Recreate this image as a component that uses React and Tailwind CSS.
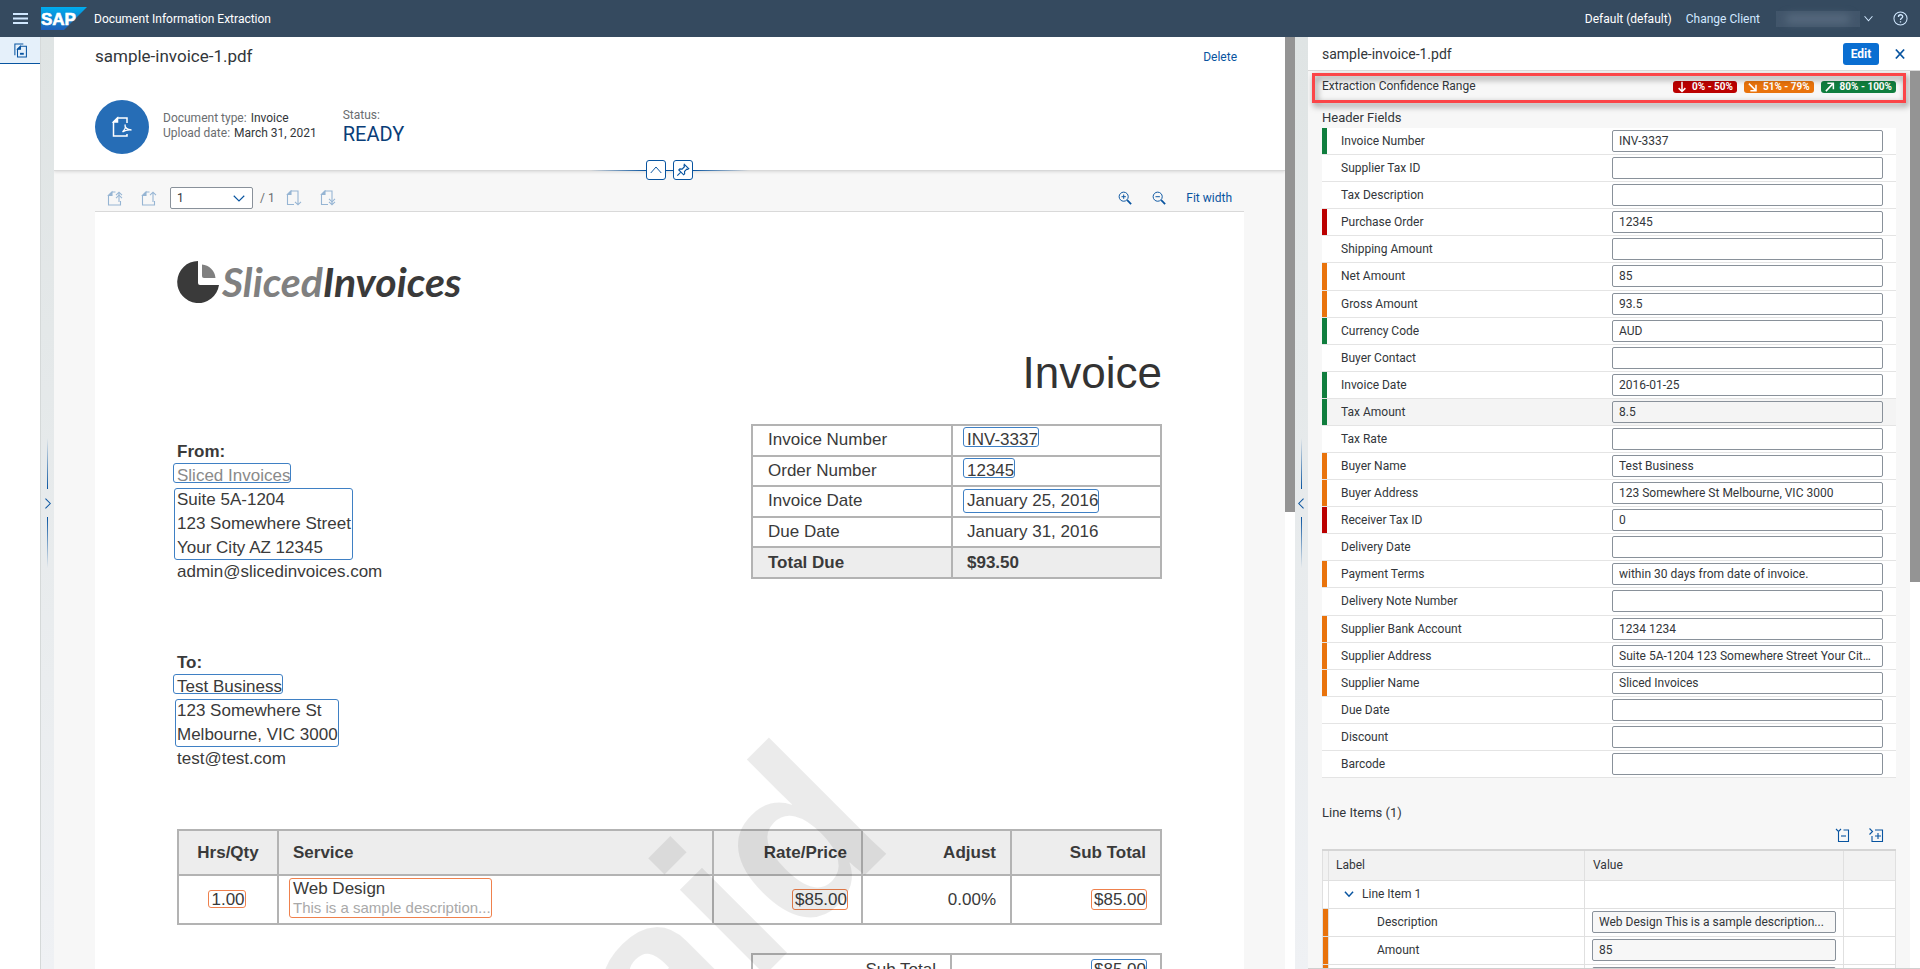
import React from "react";

const GREEN = "bg-[#107e3e]";
const ORANGE = "bg-[#e9730c]";
const RED = "bg-[#bb0000]";

const headerFields = [
  ["Invoice Number", "INV-3337", GREEN],
  ["Supplier Tax ID", "", ""],
  ["Tax Description", "", ""],
  ["Purchase Order", "12345", RED],
  ["Shipping Amount", "", ""],
  ["Net Amount", "85", ORANGE],
  ["Gross Amount", "93.5", ORANGE],
  ["Currency Code", "AUD", GREEN],
  ["Buyer Contact", "", ""],
  ["Invoice Date", "2016-01-25", GREEN],
  ["Tax Amount", "8.5", GREEN],
  ["Tax Rate", "", ""],
  ["Buyer Name", "Test Business", ORANGE],
  ["Buyer Address", "123 Somewhere St Melbourne, VIC 3000", ORANGE],
  ["Receiver Tax ID", "0", RED],
  ["Delivery Date", "", ""],
  ["Payment Terms", "within 30 days from date of invoice.", ORANGE],
  ["Delivery Note Number", "", ""],
  ["Supplier Bank Account", "1234 1234", ORANGE],
  ["Supplier Address", "Suite 5A-1204 123 Somewhere Street Your City AZ 12345", ORANGE],
  ["Supplier Name", "Sliced Invoices", ORANGE],
  ["Due Date", "", ""],
  ["Discount", "", ""],
  ["Barcode", "", ""],
];

function Icon({ size = 16, className = "", children }) {
  return (
    <svg width={size} height={size} viewBox="0 0 16 16" fill="none" stroke="currentColor" strokeWidth="1.1" className={className} aria-hidden="true">
      {children}
    </svg>
  );
}

function ShellBar() {
  return (
    <header className="flex h-[37px] shrink-0 items-center bg-[#354a5f] pl-3 pr-3 text-white">
      <button aria-label="Menu" className="flex w-[17px] justify-center text-[#d1e8ff]">
        <svg width="15" height="11" viewBox="0 0 15 11" aria-hidden="true">
          <path d="M0 1h15M0 5.5h15M0 10h15" stroke="currentColor" strokeWidth="1.8" />
        </svg>
      </button>
      <a href="#home" aria-label="SAP" className="ml-3">
        <svg width="46" height="23" viewBox="0 0 46 23" aria-hidden="true">
          <defs>
            <linearGradient id="sap" x1="0" y1="0" x2="0" y2="1">
              <stop offset="0" stopColor="#00aeef" />
              <stop offset="0.5" stopColor="#0d86d1" />
              <stop offset="1" stopColor="#1e5fbb" />
            </linearGradient>
          </defs>
          <path d="M0 0h46L23 23H0z" fill="url(#sap)" />
          <text x="0" y="18" fontFamily="'Liberation Sans', Arial, sans-serif" fontWeight="700" fontSize="17" fill="#fff" stroke="#fff" strokeWidth="0.6">SAP</text>
        </svg>
      </a>
      <h1 className="ml-[7px] text-xs">Document Information Extraction</h1>
      <div className="flex-1" />
      <span className="text-xs">Default (default)</span>
      <button className="ml-3.5 text-xs text-[#d1e8ff]">Change Client</button>
      <button aria-label="User menu" className="ml-4 flex items-center gap-1 text-[#d1e8ff]">
        <span className="flex h-4 w-[84px] items-center justify-center bg-[#42566b]">
          <span className="h-2 w-16 rounded bg-[#5a6d82] blur-xs" />
        </span>
        <Icon size={9}><path d="M1 4l7 8 7-8" strokeWidth="1.8" /></Icon>
      </button>
      <button aria-label="Help" className="ml-5 text-[#d1e8ff]">
        <Icon size={15}>
          <circle cx="8" cy="8" r="7" />
          <path d="M5.8 6.3c0-3 4.5-3 4.5-.3 0 1.700-2.300 1.700-2.300 3.500M8 10.800v1.500" strokeWidth="1.400" />
        </Icon>
      </button>
    </header>
  );
}

function SideNav() {
  return (
    <nav className="w-10 shrink-0 bg-white">
      <a href="#documents" aria-label="Documents" className="flex h-[27px] items-center justify-center border-b border-[#0854a0] bg-[#e5f0fa] text-[#0854a0]">
        <Icon size={15}>
          <path d="M2 13V1h9" />
          <path d="M8 3.500h6.300v11.500H4.800V6.700z" />
          <path d="M8 3.500v3.200H4.800z" fill="currentColor" />
          <path d="M7.500 11.500h4" strokeWidth="2" />
        </Icon>
      </a>
    </nav>
  );
}

function Splitter({ direction }) {
  return (
    <div className={"flex shrink-0 flex-col items-center justify-center bg-linear-to-b from-[#dfe4e4] to-[#eff1f4] " + (direction === "right" ? "w-[14px] border-l border-[#d5d9d9]" : "w-[13px]")}>
      <span className="h-[51px] w-px bg-linear-to-b from-transparent to-[#0854a0]" />
      <button aria-label="Resize panels" className="flex h-7 items-center text-[#0854a0]">
        <Icon size={11}>
          <path d={direction === "right" ? "M5 1l7 7-7 7" : "M11 1L4 8l7 7"} strokeWidth="1.500" />
        </Icon>
      </button>
      <span className="h-[51px] w-px bg-linear-to-t from-transparent to-[#0854a0]" />
    </div>
  );
}

function ObjectHeader() {
  return (
    <section className="relative h-[134px] shrink-0 border-b border-[#d9d9d9] bg-white pl-[41px] pr-[48px] shadow-[0_1px_3px_rgba(0,0,0,0.12)]">
      <div className="flex h-10 items-center justify-between">
        <h2 className="text-[17px] text-[#32363a]">sample-invoice-1.pdf</h2>
        <button className="text-xs text-[#0854a0]">Delete</button>
      </div>
      <div className="mt-[23px] flex items-start">
        <div className="flex size-[54px] items-center justify-center rounded-full bg-[#266db6] text-white">
          <svg width="22" height="22" viewBox="0 0 22 22" fill="none" stroke="currentColor" strokeWidth="1.500" aria-hidden="true">
            <path d="M16 7V2H6.500L2.500 6v14H16v-2" />
            <path d="M6.500 2v4h-4z" fill="currentColor" />
            <path d="M14 8.500c.8 3 .6 4.500-2.500 7.500M14 8.500c-.4 3.500 2.500 5 6.500 5.500-3.500-.3-6.500.3-9 2" strokeWidth="1.300" />
          </svg>
        </div>
        <dl className="ml-3.5 mt-[11px] text-xs leading-[15px]">
          <div className="flex gap-1"><dt className="text-[#6a6d70]">Document type:</dt><dd className="text-[#32363a]">Invoice</dd></div>
          <div className="flex gap-1"><dt className="text-[#6a6d70]">Upload date:</dt><dd className="text-[#32363a]">March 31, 2021</dd></div>
        </dl>
        <dl className="ml-[26px] mt-1.5">
          <dt className="text-xs leading-[18px] text-[#6a6d70]">Status:</dt>
          <dd className="text-xl leading-5 text-[#0a3e78]">READY</dd>
        </dl>
      </div>
      <div className="absolute -bottom-[10px] left-0 right-0 flex items-center justify-center">
        <span className="h-px w-[56px] bg-linear-to-r from-transparent to-[#0854a0]" />
        <button aria-label="Collapse header" className="flex size-5 items-center justify-center rounded-[3px] border border-[#0854a0] bg-white text-[#0854a0]">
          <Icon size={12}><path d="M1 12l7-8 7 8" strokeWidth="1.300" /></Icon>
        </button>
        <span className="h-px w-[7px] bg-[#0854a0]" />
        <button aria-label="Pin header" className="flex size-5 items-center justify-center rounded-[3px] border border-[#0854a0] bg-white text-[#0854a0]">
          <Icon size={14}>
            <path d="M9.500 1.500l5 5-1.200.7-1-.2-2.600 2.800.2 2.500-1.200 1.200L3.200 8l1.200-1.200 2.600.2 2.600-2.700-.4-1.500zM5.500 10.500L1.500 14.500" strokeWidth="1.300" />
          </Icon>
        </button>
        <span className="h-px w-[56px] bg-linear-to-l from-transparent to-[#0854a0]" />
      </div>
    </section>
  );
}

function PageIcon({ up, double }) {
  return (
    <Icon>
      {up ? (
        <>
          <path d="M8.500 2H5L1.500 5.500v9.500h12v-4" />
          <path d="M5 2v3.500H1.500z" fill="currentColor" />
          <path d="M12 12V2.500M9 5.200l3-3 3 3" />
          {double && <path d="M9 8.200l3-3 3 3" />}
        </>
      ) : (
        <>
          <path d="M12 6V1H5L1.500 4.500V14.500h6.500" />
          <path d="M5 1v3.500H1.500z" fill="currentColor" />
          <path d="M12 6v8.500M9 11.800l3 3 3-3" />
          {double && <path d="M9 8.800l3 3 3-3" />}
        </>
      )}
    </Icon>
  );
}

function ViewerToolbar() {
  return (
    <div className="mx-[41px] flex h-[41px] items-center border-b border-[#d9d9d9] pt-[14px] text-xs text-[#0854a0]">
      <button disabled aria-label="First page" className="ml-3 mr-[18px] opacity-40"><PageIcon up double /></button>
      <button disabled aria-label="Previous page" className="mr-[13px] opacity-40"><PageIcon up /></button>
      <div className="relative">
        <select aria-label="Page" className="block h-[22px] w-[83px] appearance-none rounded-xs border border-[#89919a] bg-white pl-[6px] text-xs text-[#32363a]">
          <option>1</option>
        </select>
        <Icon size={12} className="pointer-events-none absolute right-2 top-[5px]"><path d="M1 5l7 7 7-7" strokeWidth="1.500" /></Icon>
      </div>
      <span className="ml-[7px] text-[#6a6d70]">/ 1</span>
      <button disabled aria-label="Next page" className="ml-[11px] mr-[18px] opacity-40"><PageIcon /></button>
      <button disabled aria-label="Last page" className="opacity-40"><PageIcon double /></button>
      <div className="flex-1" />
      <button aria-label="Zoom in" className="mr-5">
        <Icon size={14}><circle cx="6.500" cy="6.500" r="5.200" /><path d="M4 6.500h5M6.500 4v5" /><path d="M10.500 10.500L15 15" strokeWidth="2" /></Icon>
      </button>
      <button aria-label="Zoom out" className="mr-5">
        <Icon size={14}><circle cx="6.500" cy="6.500" r="5.200" /><path d="M4 6.500h5" /><path d="M10.500 10.500L15 15" strokeWidth="2" /></Icon>
      </button>
      <button className="mr-3">Fit width</button>
    </div>
  );
}

function Mark({ tone = "blue", box = "-left-1 -right-px -top-px bottom-[5px]", className = "", children }) {
  return (
    <span className={"relative inline-block " + className}>
      {children}
      <span className={"absolute rounded-[3px] border " + (tone === "blue" ? "border-[#3f80c4] " : "border-[#ef814d] ") + box} />
    </span>
  );
}

function InvoicePage() {
  const cell = "border-2 border-[#b3b3b3]";
  return (
    <article className="relative mx-[41px] bg-white px-[82px] pb-10 pt-[47px] font-['Liberation_Sans',Arial,sans-serif] text-[17px] leading-6 text-[#3a3a3a]">
      <div className="flex h-[46px] items-center">
        <svg width="45" height="46" viewBox="0 0 45 46" aria-hidden="true">
          <path d="M21 2a21 21 0 1 0 21 24H23a2 2 0 0 1-2-2z" fill="#3a3a3a" />
          <path d="M25 5.500A15 15 0 0 1 38.500 19H27a2 2 0 0 1-2-2z" fill="#808080" />
        </svg>
        <span className="font-[Lato,sans-serif] text-[41px] font-bold italic leading-[50px]">
          <span className="text-[#808080]">Sliced</span>Invoices
        </span>
      </div>
      <h3 className="mt-[43px] text-right text-[44px] leading-[50px] text-[#333333]">Invoice</h3>
      <div className="mt-[26px] flex items-start justify-between">
        <div className="pt-4">
          <p className="font-bold">From:</p>
          <p><Mark className="text-[#8a8a8a]">Sliced Invoices</Mark></p>
          <p>
            <Mark box="-left-[3px] -right-[2px] top-0 bottom-0">
              Suite 5A-1204<br />123 Somewhere Street<br />Your City AZ 12345
            </Mark>
          </p>
          <p>admin@slicedinvoices.com</p>
          <p className="mt-[67px] font-bold">To:</p>
          <p><Mark>Test Business</Mark></p>
          <p>
            <Mark box="-left-[2px] -right-px top-0 bottom-0">
              123 Somewhere St<br />Melbourne, VIC 3000
            </Mark>
          </p>
          <p>test@test.com</p>
        </div>
        <table className="h-[155px] w-[411px] border-collapse">
          <tbody>
            {[
              ["Invoice Number", <Mark>INV-3337</Mark>],
              ["Order Number", <Mark>12345</Mark>],
              ["Invoice Date", <Mark box="-left-1 -right-px top-0 bottom-0">January 25, 2016</Mark>],
              ["Due Date", "January 31, 2016"],
            ].map(([label, value]) => (
              <tr key={label}>
                <td className={cell + " w-[200px] pl-[15px]"}>{label}</td>
                <td className={cell + " pl-[14px]"}>{value}</td>
              </tr>
            ))}
            <tr className="bg-[#ededed] font-bold">
              <td className={cell + " pl-[15px]"}>Total Due</td>
              <td className={cell + " pl-[14px]"}>$93.50</td>
            </tr>
          </tbody>
        </table>
      </div>
      <table className="mt-[58px] w-full table-fixed border-collapse">
        <thead>
          <tr className="h-[45px] bg-[#ededed]">
            <th className={cell + " w-[100px] text-center"}>Hrs/Qty</th>
            <th className={cell + " pl-[14px] text-left"}>Service</th>
            <th className={cell + " w-[149px] pr-[14px] text-right"}>Rate/Price</th>
            <th className={cell + " w-[149px] pr-[14px] text-right"}>Adjust</th>
            <th className={cell + " w-[150px] pr-[14px] text-right"}>Sub Total</th>
          </tr>
        </thead>
        <tbody>
          <tr className="h-[49px]">
            <td className={cell + " text-center"}><Mark tone="orange" box="-left-[3px] -right-px top-[2px] bottom-1">1.00</Mark></td>
            <td className={cell + " pl-[14px]"}>
              <Mark tone="orange" box="-left-1 -right-px -top-px -bottom-px" className="leading-[19px]">
                Web Design<br /><span className="text-[15px] leading-[19px] text-[#a9a9a9]">This is a sample description...</span>
              </Mark>
            </td>
            <td className={cell + " pr-[14px] text-right"}><Mark tone="orange" box="-left-[3px] -right-px top-px bottom-[2px]">$85.00</Mark></td>
            <td className={cell + " pr-[14px] text-right"}>0.00%</td>
            <td className={cell + " pr-[14px] text-right"}><Mark tone="orange" box="-left-[3px] -right-px top-px bottom-[2px]">$85.00</Mark></td>
          </tr>
        </tbody>
      </table>
      <table className="ml-auto mt-7 w-[411px] table-fixed border-collapse">
        <tbody>
          {[["Sub Total", "$85.00"], ["Tax", "$8.50"]].map(([label, value]) => (
            <tr key={label} className="h-[31px] text-right">
              <td className={cell + " w-[199px] pr-[14px]"}>{label}</td>
              <td className={cell + " pr-[14px]"}><Mark box="-left-[3px] -right-px top-px bottom-[2px]">{value}</Mark></td>
            </tr>
          ))}
        </tbody>
      </table>
      <svg className="pointer-events-none absolute inset-0 h-full w-full" aria-hidden="true">
        <text transform="translate(802 631) rotate(-45)" textAnchor="end" fontFamily="'Liberation Sans', Arial, sans-serif" fontWeight="700" fontSize="228" fill="#000" fillOpacity="0.08">Paid</text>
      </svg>
    </article>
  );
}

function Tag({ className, icon, children }) {
  return (
    <span className={"flex h-3 items-center gap-1 rounded-[3px] pl-[3px] pr-1 text-[10px] font-bold leading-3 text-white " + className}>
      <Icon size={12}>{icon}</Icon>
      {children}
    </span>
  );
}

function ExtractionPanel() {
  const line = "border border-[#e0e0e0]";
  return (
    <aside className="flex w-[612px] shrink-0 flex-col border-b border-[#d0d0d0] bg-[#f7f7f7] text-[#32363a]">
      <div className="flex h-[34px] shrink-0 items-center border-b border-[#d9d9d9] bg-white pl-3.5 pr-[14px]">
        <h2 className="flex-1 text-sm">sample-invoice-1.pdf</h2>
        <button className="h-[22px] w-9 rounded-[3px] bg-[#0a6ed1] text-xs font-bold text-white">Edit</button>
        <button aria-label="Close" className="ml-[15px] text-[#0854a0]"><Icon size={12}><path d="M2.500 2L13.500 14M13.500 2L2.500 14" strokeWidth="2.400" /></Icon></button>
      </div>
      <div className="flex min-h-0 flex-1">
        <div className="min-w-0 flex-1 overflow-hidden">
          <div className="relative ml-1 mr-1 mt-0.5 flex h-[30px] items-start px-[10px] pt-[3px]">
            <h3 className="flex-1 text-xs leading-5">Extraction Confidence Range</h3>
            <div className="flex h-[21px] items-center gap-[7px]">
              <Tag className={RED} icon={<path d="M8 1v13M3.500 9.500L8 14l4.500-4.500" strokeWidth="2" />}>0% - 50%</Tag>
              <Tag className={ORANGE} icon={<path d="M2.500 3.500l9 9M12 5v8H4.500" strokeWidth="2" />}>51% - 79%</Tag>
              <Tag className={GREEN} icon={<path d="M2.500 13.500l9.500-10M4.500 3H12.500v8" strokeWidth="2" />}>80% - 100%</Tag>
            </div>
            <div className="pointer-events-none absolute inset-0 border-[3px] border-[#fb4548] drop-shadow-[2px_3px_3px_rgba(0,0,0,0.5)]" />
          </div>
          <h3 className="ml-3.5 mt-[5px] h-5 text-[13px] leading-5">Header Fields</h3>
          <div className="ml-3.5 mr-3.5 grid h-[650px] auto-rows-fr">
            {headerFields.map(([label, value, tone], i) => {
              const active = label === "Tax Amount";
              return (
                <div key={label} className={"flex items-stretch border-b border-[#e4e4e4] text-xs " + (active ? "bg-[#f4f4f4]" : "bg-white")}>
                  <span className={"w-[5px] " + tone} />
                  <label htmlFor={"field-" + i} className="flex flex-1 items-center pl-3.5">{label}</label>
                  <div className="flex w-[284px] items-center pr-[13px]">
                    <input id={"field-" + i} readOnly defaultValue={value} className={"h-[22px] w-full text-ellipsis rounded-xs border border-[#89919a] px-[6px] " + (active ? "bg-[#f4f4f4]" : "bg-white")} />
                  </div>
                </div>
              );
            })}
          </div>
          <h3 className="ml-3.5 mt-[25px] h-5 text-[13px] leading-5">Line Items (1)</h3>
          <div className="mr-[26px] mt-1 flex justify-end gap-[18px] text-[#0854a0]">
            <button aria-label="Collapse all">
              <Icon>
                <path d="M4.500 5v9.500h10V3H9.500" />
                <path d="M7 9h5" />
                <path d="M2 2l2.500 2.500L7 2" />
              </Icon>
            </button>
            <button aria-label="Expand all">
              <Icon>
                <path d="M4 9v5.500h10.500V3H7" />
                <path d="M7 9h6M10 6v6" />
                <path d="M1.500 1.500l3 3-3 3" />
              </Icon>
            </button>
          </div>
          <div className="ml-3.5 mr-3.5 mt-1.5">
            <table className="w-full table-fixed border-collapse border-t-2 border-[#d5d5d5] bg-white text-xs">
              <thead>
                <tr className="h-[30px] bg-[#f2f2f2] text-left">
                  <th className={line + " w-[6px] p-0"} />
                  <th className={line + " w-[256px] pl-[7px] font-normal"}>Label</th>
                  <th className={line + " pl-2 font-normal"}>Value</th>
                  <th className={line + " w-[52px]"} />
                </tr>
              </thead>
              <tbody>
                <tr className="h-7">
                  <td className={line} />
                  <td className={line + " pl-[15px]"}>
                    <button className="flex items-center gap-2">
                      <Icon size={10} className="text-[#0854a0]"><path d="M1.500 4.500L8 11.500l6.500-7" strokeWidth="2.400" /></Icon>
                      Line Item 1
                    </button>
                  </td>
                  <td className={line} />
                  <td className={line} />
                </tr>
                {[["Description", "Web Design This is a sample description..."], ["Amount", "85"], ["Quantity", "1"]].map(([label, value]) => (
                  <tr key={label} className="h-7">
                    <td className={line + " bg-[#e9730c] p-0"} />
                    <td className={line + " pl-12"}><label htmlFor={"item-" + label}>{label}</label></td>
                    <td className={line + " px-[7px]"}>
                      <input id={"item-" + label} readOnly defaultValue={value} className="block h-[22px] w-full rounded-xs border border-[#89919a] bg-[#f7f7f7] px-[6px]" />
                    </td>
                    <td className={line} />
                  </tr>
                ))}
              </tbody>
            </table>
          </div>
        </div>
        <div className="w-[10px] shrink-0 bg-white"><div className="h-[57%] bg-[#949494]" /></div>
      </div>
    </aside>
  );
}

export default function App() {
  return (
    <div className="flex h-screen flex-col overflow-hidden bg-[#f7f7f7] font-[Roboto,'Noto_Sans',sans-serif]">
      <ShellBar />
      <div className="flex min-h-0 flex-1">
        <SideNav />
        <Splitter direction="right" />
        <main className="flex min-w-0 flex-1 flex-col">
          <div className="flex min-h-0 flex-1">
            <div className="min-w-0 flex-1 overflow-hidden bg-[#f7f7f7]">
              <ObjectHeader />
              <ViewerToolbar />
              <InvoicePage />
            </div>
            <div className="w-[10px] shrink-0 bg-white"><div className="h-[513px] max-h-full bg-[#949494] lg:h-[51%]" /></div>
          </div>
        </main>
        <Splitter direction="left" />
        <ExtractionPanel />
      </div>
    </div>
  );
}
